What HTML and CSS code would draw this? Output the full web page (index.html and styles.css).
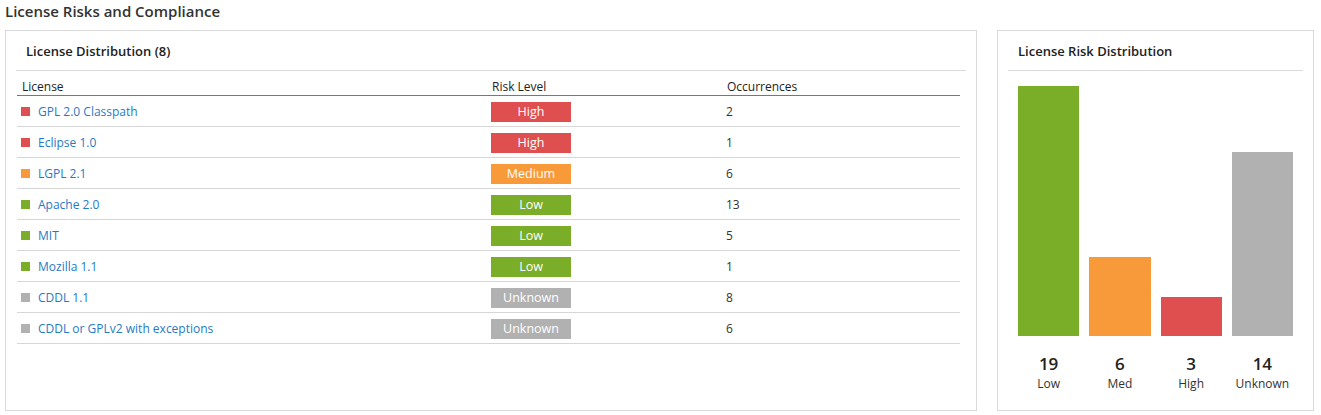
FILE: index.html
```html
<!DOCTYPE html>
<html>
<head>
<meta charset="utf-8">
<link rel="stylesheet" href="styles.css">
</head>
<body>
<h1 class="page-title">License Risks and Compliance</h1>
<div class="panels">
  <section class="panel panel-main">
    <div class="panel-head">License Distribution (8)</div>
    <table class="lic-table">
      <thead>
        <tr><th class="c-name">License</th><th class="c-risk">Risk Level</th><th class="c-occ">Occurrences</th></tr>
      </thead>
      <tbody>
        <tr><td><span class="sq high"></span><a class="lic">GPL 2.0 Classpath</a></td><td><span class="badge high">High</span></td><td>2</td></tr>
        <tr><td><span class="sq high"></span><a class="lic">Eclipse 1.0</a></td><td><span class="badge high">High</span></td><td>1</td></tr>
        <tr><td><span class="sq med"></span><a class="lic">LGPL 2.1</a></td><td><span class="badge med">Medium</span></td><td>6</td></tr>
        <tr><td><span class="sq low"></span><a class="lic">Apache 2.0</a></td><td><span class="badge low">Low</span></td><td>13</td></tr>
        <tr><td><span class="sq low"></span><a class="lic">MIT</a></td><td><span class="badge low">Low</span></td><td>5</td></tr>
        <tr><td><span class="sq low"></span><a class="lic">Mozilla 1.1</a></td><td><span class="badge low">Low</span></td><td>1</td></tr>
        <tr><td><span class="sq unk"></span><a class="lic">CDDL 1.1</a></td><td><span class="badge unk">Unknown</span></td><td>8</td></tr>
        <tr><td><span class="sq unk"></span><a class="lic">CDDL or GPLv2 with exceptions</a></td><td><span class="badge unk">Unknown</span></td><td>6</td></tr>
      </tbody>
    </table>
  </section>
  <section class="panel panel-side">
    <div class="panel-head">License Risk Distribution</div>
    <div class="chart">
      <div class="bar-col"><div class="bar low" style="height:250px"></div></div>
      <div class="bar-col"><div class="bar med" style="height:79px"></div></div>
      <div class="bar-col"><div class="bar high" style="height:39px"></div></div>
      <div class="bar-col"><div class="bar unk" style="height:184px"></div></div>
      <div class="stat"><span class="num">19</span><span class="lbl">Low</span></div>
      <div class="stat"><span class="num">6</span><span class="lbl">Med</span></div>
      <div class="stat"><span class="num">3</span><span class="lbl">High</span></div>
      <div class="stat"><span class="num">14</span><span class="lbl">Unknown</span></div>
    </div>
  </section>
</div>
</body>
</html>
```

FILE: styles.css
```css
* { box-sizing: border-box; }
html, body { margin: 0; padding: 0; background: #fff; }
body {
  font-family: "Open Sans", "Noto Sans", sans-serif;
  color: #333;
  font-size: 12px;
}
.page-title {
  margin: 0;
  padding: 0 0 0 5px;
  height: 30px;
  line-height: 22px;
  font-size: 15px;
  font-weight: 600;
  color: #333;
}
.panels {
  display: flex;
  gap: 20px;
  padding: 0 7px 0 5px;
}
.panel {
  border: 1px solid #dadada;
  height: 381px;
  padding: 0 10px;
}
.panel-main { width: 972px; }
.panel-side { width: 317px; }
.panel-head {
  height: 40px;
  line-height: 40px;
  padding-left: 10px;
  border-bottom: 1px solid #dadada;
  font-size: 13px;
  font-weight: 600;
  color: #222;
}
.lic-table {
  margin: 5px 0 0 1px;
  width: 943px;
  border-collapse: collapse;
  table-layout: fixed;
}
.lic-table th {
  text-align: left;
  font-weight: 400;
  color: #222;
  height: 19px;
  padding: 0 5px;
  line-height: 16px;
  border-bottom: 1px solid #777;
  vertical-align: bottom;
}
.c-name { width: 470px; }
.c-risk { width: 235px; }
.lic-table td {
  height: 31px;
  padding: 2px 4px 0;
  border-bottom: 1px solid #d6d6d6;
  vertical-align: middle;
}
.sq {
  display: inline-block;
  width: 9px;
  height: 9px;
  margin-right: 8px;
  vertical-align: 0;
}
.lic { color: #1f7bc6; text-decoration: none; }
.badge {
  display: inline-block;
  width: 80px;
  height: 20px;
  line-height: 20px;
  text-align: center;
  color: #fff;
  font-size: 12.5px;
}
.high { background: #e04f4f; }
.med { background: #f99a3a; }
.low { background: #7aad28; }
.unk { background: #b1b1b1; }
.chart {
  display: grid;
  grid-template-columns: repeat(4, 1fr);
  column-gap: 10px;
  width: 275px;
  margin: 15px 0 0 10px;
}
.bar-col {
  height: 250px;
  display: flex;
  align-items: flex-end;
}
.bar { width: 100%; }
.stat {
  display: flex;
  flex-direction: column;
  align-items: center;
  padding-top: 17px;
}
.num {
  font-size: 17px;
  font-weight: 600;
  line-height: 22px;
  color: #222;
}
.lbl {
  font-size: 12px;
  line-height: 18px;
  color: #333;
}
```
